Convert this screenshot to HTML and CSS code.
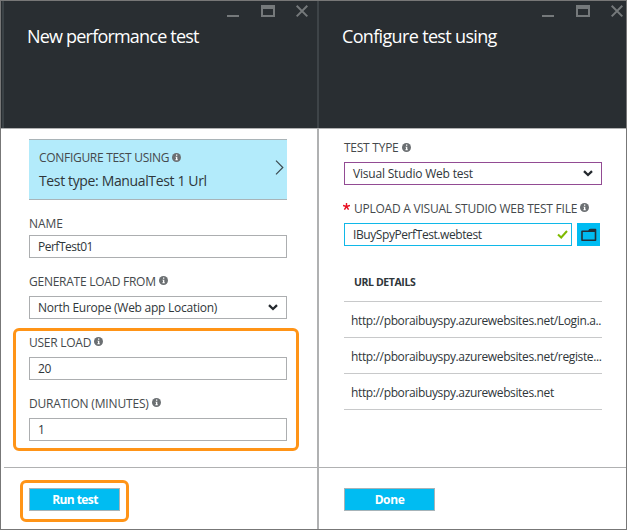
FILE: index.html
```
<!DOCTYPE html>
<html lang="en">
<head>
<meta charset="utf-8">
<title>New performance test</title>
<link rel="stylesheet" href="styles.css">
</head>
<body>
<svg class="defs" width="0" height="0" aria-hidden="true">
  <symbol id="info" viewBox="0 0 9 9"><circle cx="4.5" cy="4.5" r="4.5" fill="#6b6f72"/><path d="M4 1.6h1.3v1.2H4zM3.5 3.7h1.8v2.6h.5v.9H3.4v-.9H4V4.6h-.5z" fill="#fff"/></symbol>
  <symbol id="chev" viewBox="0 0 10 7"><path d="M1 1.2 5 5 9 1.2" fill="none" stroke="#24292e" stroke-width="2.3"/></symbol>
  <symbol id="controls" viewBox="0 0 82 13"><path d="M0 10h12v2H0zM34 0h14v12H34zM36 4v6h10V4z" fill="#75797b" fill-rule="evenodd"/><path d="M69.700 .8 80.300 11.400M80.300 .8 69.700 11.400" stroke="#75797b" stroke-width="2" fill="none"/></symbol>
</svg>
<main class="window">
  <section class="blade blade-left">
    <header class="head">
      <svg class="controls"><use href="#controls"/></svg>
      <h1 class="title title-new">New performance test</h1>
    </header>
    <div class="body">
      <div class="card">
        <div>
          <div class="card-label">CONFIGURE TEST USING <svg class="info"><use href="#info"/></svg></div>
          <div class="card-value">Test type: ManualTest 1 Url</div>
        </div>
        <svg class="arrow" viewBox="0 0 9 15"><path d="M1 .7 7.800 7.500 1 14.300" fill="none" stroke="#3c4a50" stroke-width="1.200"/></svg>
      </div>
      <div class="label name">NAME</div>
      <div class="field"><span class="t-perf">PerfTest01</span></div>
      <div class="label">GENERATE LOAD FROM <svg class="info"><use href="#info"/></svg></div>
      <div class="field"><span class="t-region">North Europe (Web app Location)</span><svg class="chev"><use href="#chev"/></svg></div>
      <div class="label">USER LOAD <svg class="info"><use href="#info"/></svg></div>
      <div class="field"><span class="t-region">20</span></div>
      <div class="label t-duration">DURATION (MINUTES) <svg class="info"><use href="#info"/></svg></div>
      <div class="field"><span>1</span></div>
    </div>
    <footer class="foot"><div class="button t-run">Run test</div></footer>
    <div class="mark mark-load"></div>
    <div class="mark mark-run"></div>
  </section>
  <section class="blade blade-right">
    <header class="head">
      <svg class="controls"><use href="#controls"/></svg>
      <h1 class="title title-conf">Configure test using</h1>
    </header>
    <div class="body body-right">
      <div class="label">TEST TYPE <svg class="info"><use href="#info"/></svg></div>
      <div class="field purple"><span class="t-type">Visual Studio Web test</span><svg class="chev"><use href="#chev"/></svg></div>
      <div class="label t-upload"><svg class="star" viewBox="0 0 6 6"><path d="M3 0v3M0 2.100 3 3M6 2.100 3 3M1.200 5.700 3 3M4.800 5.700 3 3" fill="none" stroke="#e81123" stroke-width="1.200"/></svg>UPLOAD A VISUAL STUDIO WEB TEST FILE <svg class="info"><use href="#info"/></svg></div>
      <div class="upload">
        <div class="field cyan"><span class="t-file">IBuySpyPerfTest.webtest</span><svg class="check" viewBox="0 0 11 9"><path d="M1 4.500 4.200 7.500 10 1" fill="none" stroke="#7fba00" stroke-width="2"/></svg></div>
        <div class="browse"><svg class="folder" viewBox="0 0 16 14"><path d="M1 3.300H8L9.500 1.500H14.500V12.300H1z" fill="none" stroke="#24313a" stroke-width="1.600" stroke-linejoin="round"/><path d="M8 1h7v3H7z" fill="#24313a"/></svg></div>
      </div>
      <div class="urls">
        <div class="urls-head">URL DETAILS</div>
        <div class="url">http://pboraibuyspy.azurewebsites.net/Login.a..</div>
        <div class="url">http://pboraibuyspy.azurewebsites.net/registe...</div>
        <div class="url">http://pboraibuyspy.azurewebsites.net</div>
      </div>
    </div>
    <footer class="foot"><div class="button t-done">Done</div></footer>
  </section>
</main>
</body>
</html>
```
FILE: styles.css
```
* { box-sizing: border-box; }
body { margin: 0; font: 12px "Open Sans", "Noto Sans", sans-serif; color: #2f363a; }
svg { display: block; }
.defs { position: absolute; }
.window { width: 627px; height: 530px; border: 1px solid #777; display: flex; background: #fff; overflow: hidden; }
.blade { position: relative; display: flex; flex-direction: column; height: 528px; }
.blade-left { width: 316px; }
.blade-right { width: 309px; border-left: 2px solid #b0b1b2; }
.head { flex: none; height: 128px; background: #292e32; border-bottom: 1px solid #b0b1b2; }
.blade-left .head { box-shadow: inset 1px 0 #292e32, inset 3px 0 #3b4246; }
.blade-right .head { margin-left: -2px; padding-left: 2px; box-shadow: inset 2px 0 #3e4448; }
.controls { width: 82px; height: 13px; margin: 4px 0 0 226px; }
.blade-right .controls { margin-left: 223px; }
.title { margin: 5px 0 0 26px; font-size: 18px; font-weight: 400; line-height: 26px; color: #fff; white-space: nowrap; }
.blade-right .title { margin-left: 23px; }
.title-new { letter-spacing: -.8px; }
.title-conf { letter-spacing: -.66px; }
.body { flex: none; height: 338px; padding: 10px 30px 0 28px; }
.body-right { padding: 10px 24px 0 25px; }
.card { display: flex; justify-content: space-between; height: 61px; padding: 10px 3px 0 10px; background: #b3ebfb; border: solid #a9b4b8; border-width: 1px 0; }
.card-label, .label { display: flex; align-items: center; gap: 4px; line-height: 18px; letter-spacing: -.25px; color: #45494c; white-space: nowrap; }
.card-label { height: 18px; margin-top: -1px; letter-spacing: -.3px; }
.card-value { margin-top: 3px; line-height: 22px; font-size: 14px; letter-spacing: -.36px; white-space: nowrap; }
.arrow { width: 9px; height: 15px; margin-top: 10px; }
.info { flex: none; width: 9px; height: 9px; margin-left: -1px; position: relative; top: -1px; }
.label { height: 38px; padding-top: 9px; }
.label.name { height: 35px; padding-top: 15px; letter-spacing: -.05px; }
.name { align-items: flex-start; }
.label.t-duration { letter-spacing: -.17px; }
.label.t-upload { gap: 4px; letter-spacing: -.235px; }
.star { width: 7px; height: 7px; margin: -4px 0 0 -1px; }
.field { display: flex; align-items: center; justify-content: space-between; height: 23px; padding: 0 8px; border: 1px solid #acaeb0; background: #fff; line-height: 21px; white-space: nowrap; }
.chev { width: 10px; height: 7px; }
.t-perf { letter-spacing: -.5px; }
.t-region { letter-spacing: -.25px; }
.t-type { letter-spacing: -.2px; }
.t-file { letter-spacing: -.42px; }
.body-right .label:first-child { height: 23px; padding: 0 0 5px; }
.purple { border-color: #924b93; }
.cyan { border-color: #10b8e8; width: 228px; padding-right: 3px; }
.upload { display: flex; justify-content: space-between; padding-right: 2px; }
.browse { display: grid; place-items: center; width: 23px; height: 23px; background: #00bcf2; }
.folder { width: 16px; height: 14px; }
.check { width: 11px; height: 9px; }
.urls { margin-top: 17px; }
.urls-head { height: 39px; padding: 10px 0 0 10px; border-bottom: 1px solid #c8c9ca; font-size: 10.5px; font-weight: 700; line-height: 18px; letter-spacing: -.4px; }
.url { height: 36px; padding: 1px 0 0 7px; border-bottom: 1px solid #c8c9ca; line-height: 36px; letter-spacing: -.365px; white-space: nowrap; }
.foot { flex: none; height: 62px; border-top: 1px solid #b0b1b2; padding: 20px 0 0 25px; }
.blade-left .foot { margin-left: 3px; }
.button { width: 91px; height: 23px; border: 1px solid #a6b3b8; background: #00bcf2; color: #fff; font-weight: 700; line-height: 21px; text-align: center; letter-spacing: -.5px; }
.t-run { padding-left: 1px; letter-spacing: -.6px; }
.t-done { letter-spacing: -.4px; }
.mark { position: absolute; border: 3px solid #ff9417; border-radius: 6px; }
.mark-load { left: 12px; top: 327px; width: 286px; height: 123px; }
.mark-run { left: 19px; top: 479px; width: 109px; height: 42px; }
```
